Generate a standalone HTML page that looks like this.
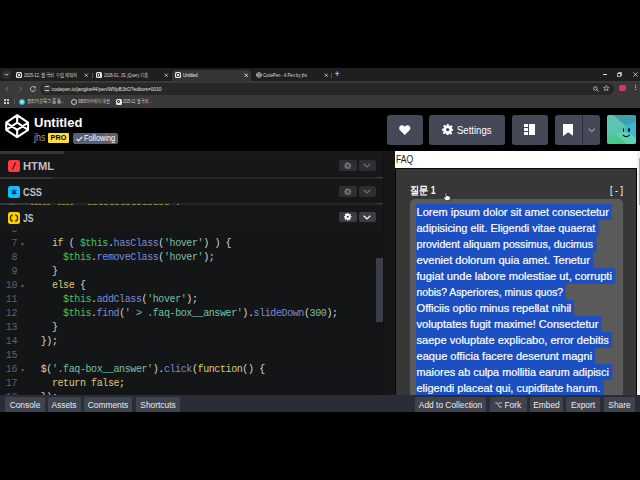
<!DOCTYPE html>
<html><head><meta charset="utf-8">
<style>
*{margin:0;padding:0;box-sizing:border-box}
html,body{width:640px;height:480px;overflow:hidden;background:#000;font-family:"Liberation Sans",sans-serif}
.a{position:absolute}
.mono{font-family:"Liberation Mono",monospace}
/* chrome */
#tabs{left:0;top:68px;width:640px;height:13px;background:#1f1f1f}
#toolbar{left:0;top:81px;width:640px;height:14px;background:#393939}
#bookmarks{left:0;top:95px;width:640px;height:13px;background:#393939}
#cphead{left:0;top:108px;width:640px;height:43px;background:#000}
#editor{left:0;top:151px;width:383px;height:244px;background:#131517}
#resizer{left:383px;top:151px;width:12px;height:244px;background:#161616;border-left:1px solid #101112}
#preview{left:395px;top:151px;width:245px;height:244px;background:#fff}
#footer{z-index:5;left:0;top:394.7px;width:640px;height:16.9px;background:#2a2d35}
.btn{position:absolute;background:#444857;border-radius:3px;color:#fff}
.fbtn{position:absolute;z-index:6;top:397px;height:14.6px;background:#3f434e;border-radius:2px 2px 0 0;color:#ececec;font-size:8.4px;line-height:16.4px;text-align:center;white-space:nowrap}
.ln{position:absolute;font-family:"Liberation Mono",monospace;left:0;width:17px;text-align:right;color:#5f626b;font-size:10px;letter-spacing:-0.4px;line-height:14px}
.code{position:absolute;font-family:"Liberation Mono",monospace;left:40.7px;color:#ccc;font-size:10px;letter-spacing:-0.4px;line-height:14px;white-space:pre}
.k{color:#ddca7e}.v{color:#47c45e}.m{color:#7b8ad6}.s{color:#74c2a5}.p{color:#d5d5d5}
.sel{position:absolute;left:416px;height:16px;background:#1d4dbb}
.txt{position:absolute;left:416px;color:#fff;-webkit-text-stroke:0.2px #fff;font-size:10.5px;line-height:16px;white-space:pre}

.fav{width:6px;height:6px;background:#e8e8e8;border-radius:1.5px}.fav::after{content:"";position:absolute;left:1.3px;top:1.3px;width:3.4px;height:3.4px;border:0.8px solid #333;border-radius:1px;box-sizing:border-box}
.ttl{top:69.8px;color:#dcdcdc;font-size:5.8px;line-height:10px;white-space:nowrap}
.x{top:69.5px;color:#bbb;font-size:7px;line-height:10px}
.bk{top:96px;color:#d6d6d6;font-size:5.6px;line-height:11px;white-space:nowrap}

.ico{width:12px;height:12px;border-radius:2.5px}.ico svg{display:block}
.etl{left:23.4px;color:#bdbfc7;font-weight:bold;font-size:11.5px;line-height:14px}
.gb,.cb{width:17.5px;height:10.5px;background:#2c2e34;border-radius:2px}
.gb.on,.cb.on{background:#3a3d45}
.fm{position:absolute;left:21px;color:#5a5d66;font-size:6px;line-height:14px}
.txt span{display:inline-block;height:16px;background:#1b4fc2;transform-origin:0 0;padding-left:0.5px}
</style></head><body>
<div id="tabs" class="a"></div>
<div id="toolbar" class="a"></div>
<div id="bookmarks" class="a"></div>
<div id="cphead" class="a"></div>
<div id="editor" class="a"></div>
<div class="a" style="left:0;top:151px;width:383px;height:79px;background:#171717"></div>
<div id="resizer" class="a"></div>
<div id="preview" class="a"></div>
<div id="footer" class="a"></div>


<!-- tab strip -->
<div class="a" style="left:2px;top:70px;width:9px;height:9px;background:#2e2e2e;border-radius:3px"></div>
<svg class="a" style="left:4px;top:72px" width="5" height="5" viewBox="0 0 5 5"><path d="M0.8 1.6 L2.5 3.3 L4.2 1.6" stroke="#ddd" stroke-width="1" fill="none"/></svg>
<div class="a" style="left:172px;top:70px;width:79px;height:12px;background:#353535;border-radius:4px 4px 0 0"></div>
<div class="a fav" style="left:16px;top:72px"></div>
<div class="a ttl" style="left:23.5px;--w:53.6px;transform-origin:0 0;transform:scaleX(0.6932)/*fit*/">2025-12, 웹 국비 수업 제작자</div>
<svg class="a" style="left:84.2px;top:72.5px" width="4.5" height="4.5" viewBox="0 0 5 5"><path d="M0.6 0.6 L4.4 4.4 M4.4 0.6 L0.6 4.4" stroke="#ccc" stroke-width="0.9"/></svg>
<div class="a" style="left:91.5px;top:73px;width:1px;height:5px;background:#555"></div>
<div class="a fav" style="left:95.5px;top:72px"></div>
<div class="a ttl" style="left:103.6px;--w:44.4px;transform-origin:0 0;transform:scaleX(0.6813)/*fit*/">2026-01, JS, jQuery 기초</div>
<svg class="a" style="left:164.2px;top:72.5px" width="4.5" height="4.5" viewBox="0 0 5 5"><path d="M0.6 0.6 L4.4 4.4 M4.4 0.6 L0.6 4.4" stroke="#ccc" stroke-width="0.9"/></svg>
<div class="a fav" style="left:175px;top:72px"></div>
<div class="a ttl" style="left:183.4px;color:#f4f4f4;--w:14.6px;transform-origin:0 0;transform:scaleX(0.7428)/*fit*/">Untitled</div>
<svg class="a" style="left:243.5px;top:72.5px" width="4.5" height="4.5" viewBox="0 0 5 5"><path d="M0.6 0.6 L4.4 4.4 M4.4 0.6 L0.6 4.4" stroke="#eee" stroke-width="0.9"/></svg>
<svg class="a" style="left:255.5px;top:72px" width="6" height="6" viewBox="0 0 100 100"><path d="M50 5 L95 35 V65 L50 95 L5 65 V35 Z M50 5 V35 M50 65 V95 M5 35 L50 65 L95 35 M5 65 L50 35 L95 65" stroke="#ccc" stroke-width="12" fill="none"/></svg>
<div class="a ttl" style="left:263px;--w:44px;transform-origin:0 0;transform:scaleX(0.7186)/*fit*/">CodePen - A Pen by jhs</div>
<svg class="a" style="left:323.7px;top:72.5px" width="4.5" height="4.5" viewBox="0 0 5 5"><path d="M0.6 0.6 L4.4 4.4 M4.4 0.6 L0.6 4.4" stroke="#ccc" stroke-width="0.9"/></svg>
<div class="a" style="left:331px;top:73px;width:1px;height:5px;background:#555"></div>
<div class="a" style="left:334.5px;top:69px;color:#eee;font-size:9px;line-height:11px">+</div>
<div class="a" style="left:602.5px;top:74.3px;width:4px;height:0.8px;background:#ddd"></div>
<svg class="a" style="left:617px;top:72px" width="5" height="5" viewBox="0 0 5 5"><path d="M0.5 1.5 H3.5 V4.5 H0.5 Z M1.5 1.5 V0.5 H4.5 V3.5 H3.5" stroke="#ddd" stroke-width="0.8" fill="none"/></svg>
<svg class="a" style="left:632.8px;top:72.3px" width="5" height="5" viewBox="0 0 5 5"><path d="M0.5 0.5 L4.5 4.5 M4.5 0.5 L0.5 4.5" stroke="#ddd" stroke-width="0.8"/></svg>
<!-- toolbar -->
<svg class="a" style="left:4px;top:86px" width="34" height="6" viewBox="0 0 34 6">
<path d="M4.5 0.5 L2 3 L4.5 5.5" stroke="#777" stroke-width="0.9" fill="none"/>
<path d="M15 0.5 L17.5 3 L15 5.5" stroke="#777" stroke-width="0.9" fill="none"/>
<path d="M30.5 1.2 A2.4 2.4 0 1 0 31.2 3.6" stroke="#ccc" stroke-width="0.9" fill="none"/><path d="M29.6 0.6 L31.4 0.9 L31.1 2.6" stroke="#ccc" stroke-width="0.8" fill="none"/>
</svg>
<div class="a" style="left:40px;top:83px;width:574px;height:11.5px;background:#272727;border-radius:6px"></div>
<div class="a" style="left:42.5px;top:84px;width:9px;height:9px;background:#3a3a3a;border-radius:50%"></div>
<div class="a" style="left:45px;top:86px;width:4px;height:5px;border-top:1px solid #ccc;border-bottom:1px solid #ccc"></div>
<div class="a" style="left:51.8px;top:83.5px;color:#e3e3e3;font-size:6px;line-height:11px;white-space:nowrap;--w:109.5px;transform-origin:0 0;transform:scaleX(0.8036)/*fit*/">codepen.io/jangkw44/pen/WNpBJbO?editors=0010</div>
<svg class="a" style="left:593px;top:85.5px" width="6" height="6" viewBox="0 0 6 6"><circle cx="2.4" cy="2.4" r="1.7" stroke="#ccc" stroke-width="0.8" fill="none"/><path d="M3.7 3.7 L5.5 5.5" stroke="#ccc" stroke-width="0.9"/></svg>
<svg class="a" style="left:603px;top:85.3px" width="6.5" height="6.5" viewBox="0 0 24 24"><path d="M12 2 L14.9 8.6 L22 9.3 L16.6 14 L18.2 21 L12 17.3 L5.8 21 L7.4 14 L2 9.3 L9.1 8.6 Z" stroke="#ddd" stroke-width="2.2" fill="none" stroke-linejoin="round"/></svg>
<div class="a" style="left:619px;top:85px;width:7px;height:6px;background:#d8336b;border-radius:2px"></div>
<div class="a" style="left:635px;top:85px;width:1px;height:1px;background:#ccc;box-shadow:0 2px 0 #ccc,0 4px 0 #ccc"></div>
<!-- bookmarks -->
<div class="a" style="left:4px;top:99px;width:2px;height:2px;background:#ccc;box-shadow:3px 0 0 #ccc,0 3px 0 #ccc,3px 3px 0 #ccc"></div>
<div class="a" style="left:14px;top:98px;width:1px;height:6px;background:#555"></div>
<div class="a" style="left:19px;top:98.5px;width:6px;height:6px;background:radial-gradient(circle,#eaffff 0,#5ad0e8 40%,#1d6a88 100%);border-radius:50%"></div>
<div class="a bk" style="left:27px;--w:37px;transform-origin:0 0;transform:scaleX(0.6824)/*fit*/">코리아교육그룹 통...</div>
<div class="a" style="left:70.5px;top:98.5px;width:6px;height:6px;border:1px solid #ccc;border-radius:50%"></div>
<div class="a bk" style="left:77.6px;--w:32.4px;transform-origin:0 0;transform:scaleX(0.6646)/*fit*/">SBS아카데미 대전</div>
<div class="a fav" style="left:115.5px;top:98.5px"></div>
<div class="a bk" style="left:123.3px;--w:28.1px;transform-origin:0 0;transform:scaleX(0.5871)/*fit*/">2025-12, 웹 국비...</div>

<!-- header -->
<svg class="a" style="left:5px;top:114.3px" width="24.33" height="24.33" viewBox="0 0 100 100"><path d="M50 5 L95 35 V65 L50 95 L5 65 V35 Z M50 5 V35 M50 65 V95 M5 35 L50 65 L95 35 M5 65 L50 35 L95 65" stroke="#fff" stroke-width="8.6" fill="none" stroke-linejoin="round"/></svg>
<div class="a" style="left:34px;top:115px;color:#fff;font-weight:bold;font-size:13px;line-height:16px">Untitled</div>
<div class="a" style="left:34px;top:131px;color:#9a9ca6;font-size:10.5px;line-height:12px;transform-origin:0 0;transform:scaleX(0.85)">jhs</div>
<div class="a" style="left:48px;top:133px;width:21px;height:9.5px;background:#ffdd40;color:#000;font-weight:bold;font-size:7.3px;line-height:9.5px;text-align:center;border-radius:1px">PRO</div>
<div class="a" style="left:72.5px;top:133px;width:45px;height:10.5px;background:#5a5f73;border-radius:2px"></div>
<svg class="a" style="left:76px;top:135.5px" width="7" height="6" viewBox="0 0 7 6"><path d="M0.8 3 L2.6 4.8 L6.2 0.9" stroke="#fff" stroke-width="1.1" fill="none"/></svg>
<div class="a" style="left:83.5px;top:133px;color:#fff;font-size:8.3px;line-height:10.5px;white-space:nowrap;transform-origin:0 0;transform:scaleX(0.89)">Following</div>

<div class="btn" style="left:387px;top:115px;width:36px;height:29.6px"></div>
<svg class="a" style="left:399px;top:124.5px" width="11.5" height="10" viewBox="0 0 23 20"><path d="M11.5 20 L2 10.5 C-1 7.5 0 1 5.5 0.5 C8.5 0.2 10.5 2 11.5 4 C12.5 2 14.5 0.2 17.5 0.5 C23 1 24 7.5 21 10.5 Z" fill="#fff"/></svg>
<div class="btn" style="left:429px;top:115px;width:76px;height:29.6px"></div>
<svg class="a" style="left:441.8px;top:123.8px" width="11.4" height="11.4" viewBox="0 0 24 24"><path fill="#fff" fill-rule="evenodd" d="M10 0h4l0.6 3.4 2.3 1 2.8-2 2.8 2.8-2 2.8 1 2.3L24 10v4l-3.4 0.6-1 2.3 2 2.8-2.8 2.8-2.8-2-2.3 1L14 24h-4l-0.6-3.4-2.3-1-2.8 2-2.8-2.8 2-2.8-1-2.3L0 14v-4l3.4-0.6 1-2.3-2-2.8 2.8-2.8 2.8 2 2.3-1z M12 8.6a3.4 3.4 0 1 0 0.01 0z"/></svg>
<div class="a" style="left:456.5px;top:122.8px;color:#fff;font-size:11.5px;line-height:14px;white-space:nowrap;transform-origin:0 0;transform:scaleX(0.83)">Settings</div>
<div class="btn" style="left:512px;top:115px;width:36px;height:29.6px"></div>
<div class="a" style="left:524px;top:124.2px;width:4px;height:3px;background:#fff"></div>
<div class="a" style="left:524px;top:128.2px;width:4px;height:2.8px;background:#fff"></div>
<div class="a" style="left:524px;top:132px;width:4px;height:3px;background:#fff"></div>
<div class="a" style="left:529px;top:124.2px;width:6.2px;height:10.8px;background:#fff"></div>
<div class="btn" style="left:555px;top:115px;width:45px;height:29.6px"></div>
<div class="a" style="left:582px;top:115px;width:1px;height:29px;background:#2a2c35"></div>
<svg class="a" style="left:562.7px;top:123.7px" width="10.5" height="12.2" viewBox="0 0 10.5 12.2"><path d="M0 0 H10.5 V12.2 L5.25 8.2 L0 12.2 Z" fill="#fff"/></svg>
<svg class="a" style="left:587.5px;top:128px" width="7.5" height="4.5" viewBox="0 0 7.5 4.5"><path d="M0.6 0.6 L3.75 3.6 L6.9 0.6" stroke="#a0a3ad" stroke-width="1.1" fill="none"/></svg>
<div class="a" style="left:606.5px;top:114.8px;width:29.5px;height:29.4px;border-radius:2.5px;overflow:hidden">
<svg width="30" height="30" viewBox="0 0 30 30" style="display:block"><path d="M0 0 H30 V30 H0Z" fill="#57c9a8"/><path d="M0 0 H6 L19 11 L0 16Z" fill="#5fc4b4"/><path d="M6 0 H30 V7 L19 11Z" fill="#3f9fb0"/><path d="M30 6 V23 L17 16 L19 11Z" fill="#3db6d4"/><path d="M0 16 L19 11 L17 16 L8 19 L0 22Z" fill="#56c4ae"/><path d="M0 22 L8 19 L22 30 H0Z" fill="#46c98a"/><path d="M8 19 L17 16 L30 23 V30 H22Z" fill="#5dd3b2"/></svg>
</div>
<div class="a" style="left:622.5px;top:128.3px;width:1.8px;height:3.7px;background:#111;border-radius:1px"></div>
<div class="a" style="left:627.9px;top:128.3px;width:1.8px;height:3.7px;background:#111;border-radius:1px"></div>
<svg class="a" style="left:622px;top:133.8px" width="8.5" height="4" viewBox="0 0 8.5 4"><path d="M0.8 0.8 Q4.25 4.4 7.7 0.8" stroke="#111" stroke-width="1.2" fill="none"/></svg>

<!-- editor headers -->
<div class="a" style="left:16px;top:160px;width:12px;height:12px"></div>


<!-- editor headers -->
<div class="a" style="left:0;top:151px;width:383px;height:2px;background:#1b1c1f"></div>
<div class="a" style="left:0;top:151px;width:64px;height:2.5px;background:#34363d"></div>
<div class="a" style="left:0;top:177px;width:383px;height:1.5px;background:#242526"></div>
<div class="a" style="left:0;top:177px;width:53px;height:2px;background:#34363d"></div>
<div class="a" style="left:0;top:203px;width:383px;height:1.5px;background:#242526"></div>
<div class="a" style="left:0;top:203px;width:40px;height:2px;background:#34363d"></div>
<div class="a" style="left:376px;top:177px;width:7px;height:1px;background:#3a3c44"></div>
<div class="a" style="left:376px;top:203px;width:7px;height:1px;background:#3a3c44"></div>
<div class="a" style="left:9px;top:204px;width:5px;height:1px;background:#55565c"></div><div class="a" style="left:31px;top:204px;width:20px;height:1px;background:repeating-linear-gradient(90deg,#8f8446 0 3px,transparent 3px 4px)"></div><div class="a" style="left:58px;top:204px;width:16px;height:1px;background:repeating-linear-gradient(90deg,#8f8446 0 3px,transparent 3px 4px)"></div><div class="a" style="left:88px;top:204px;width:82px;height:1px;background:repeating-linear-gradient(90deg,#8f8446 0 4px,transparent 4px 5px,#8f8446 5px 9px,transparent 9px 11px)"></div><div class="a" style="left:177px;top:204px;width:2px;height:1px;background:#77777a"></div>

<div class="a ico" style="left:8px;top:160px;background:#ff3c41"><svg width="12" height="12" viewBox="0 0 12 12"><path d="M7.6 2.6 L4.4 9.4" stroke="#4a0e10" stroke-width="1.2"/></svg></div>
<div class="a etl" style="top:159px;--w:31px;transform-origin:0 0;transform:scaleX(0.9706)/*fit*/">HTML</div>
<div class="a ico" style="left:8px;top:186px;background:#0ebeff"><svg width="12" height="12" viewBox="0 0 12 12"><path d="M6 3.2 V8.8 M3.6 4.6 L8.4 7.4 M8.4 4.6 L3.6 7.4" stroke="#063a5a" stroke-width="1.1"/></svg></div>
<div class="a etl" style="top:185px;--w:19px;transform-origin:0 0;transform:scaleX(0.8032)/*fit*/">CSS</div>
<div class="a ico" style="left:8px;top:212px;background:#fcd000"><svg width="12" height="12" viewBox="0 0 12 12"><path d="M4.8 2.8 Q2.4 3.2 2.4 6 Q2.4 8.8 4.8 9.2 M7.2 2.8 Q9.6 3.2 9.6 6 Q9.6 8.8 7.2 9.2" stroke="#3a3000" stroke-width="1.3" fill="none"/></svg></div>
<div class="a etl" style="top:211px;--w:10.5px;transform-origin:0 0;transform:scaleX(0.7458)/*fit*/">JS</div>

<div class="a gb" style="left:339px;top:160px"><svg width="7.5" height="7.5" viewBox="0 0 24 24" style="position:absolute;left:5px;top:1.5px"><path fill="#6d6f77" fill-rule="evenodd" d="M10 0h4l0.6 3.4 2.3 1 2.8-2 2.8 2.8-2 2.8 1 2.3L24 10v4l-3.4 0.6-1 2.3 2 2.8-2.8 2.8-2.8-2-2.3 1L14 24h-4l-0.6-3.4-2.3-1-2.8 2-2.8-2.8 2-2.8-1-2.3L0 14v-4l3.4-0.6 1-2.3-2-2.8 2.8-2.8 2.8 2 2.3-1z M12 8.6a3.4 3.4 0 1 0 0.01 0z"/></svg></div><div class="a cb" style="left:358.5px;top:160px"><svg width="8" height="5" viewBox="0 0 8 5" style="position:absolute;left:4.75px;top:3px"><path d="M0.7 0.7 L4 3.9 L7.3 0.7" stroke="#6d6f77" stroke-width="1.2" fill="none"/></svg></div>
<div class="a gb" style="left:339px;top:186px"><svg width="7.5" height="7.5" viewBox="0 0 24 24" style="position:absolute;left:5px;top:1.5px"><path fill="#6d6f77" fill-rule="evenodd" d="M10 0h4l0.6 3.4 2.3 1 2.8-2 2.8 2.8-2 2.8 1 2.3L24 10v4l-3.4 0.6-1 2.3 2 2.8-2.8 2.8-2.8-2-2.3 1L14 24h-4l-0.6-3.4-2.3-1-2.8 2-2.8-2.8 2-2.8-1-2.3L0 14v-4l3.4-0.6 1-2.3-2-2.8 2.8-2.8 2.8 2 2.3-1z M12 8.6a3.4 3.4 0 1 0 0.01 0z"/></svg></div><div class="a cb" style="left:358.5px;top:186px"><svg width="8" height="5" viewBox="0 0 8 5" style="position:absolute;left:4.75px;top:3px"><path d="M0.7 0.7 L4 3.9 L7.3 0.7" stroke="#6d6f77" stroke-width="1.2" fill="none"/></svg></div>
<div class="a gb on" style="left:339px;top:211.7px"><svg width="7.5" height="7.5" viewBox="0 0 24 24" style="position:absolute;left:5px;top:1.5px"><path fill="#fff" fill-rule="evenodd" d="M10 0h4l0.6 3.4 2.3 1 2.8-2 2.8 2.8-2 2.8 1 2.3L24 10v4l-3.4 0.6-1 2.3 2 2.8-2.8 2.8-2.8-2-2.3 1L14 24h-4l-0.6-3.4-2.3-1-2.8 2-2.8-2.8 2-2.8-1-2.3L0 14v-4l3.4-0.6 1-2.3-2-2.8 2.8-2.8 2.8 2 2.3-1z M12 8.6a3.4 3.4 0 1 0 0.01 0z"/></svg></div><div class="a cb on" style="left:358.5px;top:211.7px"><svg width="8" height="5" viewBox="0 0 8 5" style="position:absolute;left:4.75px;top:3px"><path d="M0.7 0.7 L4 3.9 L7.3 0.7" stroke="#fff" stroke-width="1.2" fill="none"/></svg></div>

<!-- code -->
<div class="a" style="left:0;top:230px;width:383px;height:165px;overflow:hidden">
<div style="position:absolute;left:0;top:-7.5px;width:383px">
<div class="ln" style="top:0">6</div>
<div class="ln" style="top:14px">7</div><div class="fm" style="top:14px">▾</div>
<div class="ln" style="top:28px">8</div>
<div class="ln" style="top:42px">9</div>
<div class="ln" style="top:56px">10</div><div class="fm" style="top:56px">▾</div>
<div class="ln" style="top:70px">11</div>
<div class="ln" style="top:84px">12</div>
<div class="ln" style="top:98px">13</div>
<div class="ln" style="top:112px">14</div>
<div class="ln" style="top:126px">15</div>
<div class="ln" style="top:140px">16</div><div class="fm" style="top:140px">▾</div>
<div class="ln" style="top:154px">17</div>
<div class="ln" style="top:168px">18</div>
<div class="code" style="top:14px">  <span class="k">if</span> <span class="p">(</span> <span class="v">$this</span><span class="p">.</span><span class="m">hasClass</span><span class="p">(</span><span class="s">'hover'</span><span class="p">) ) {</span></div>
<div class="code" style="top:28px">    <span class="v">$this</span><span class="p">.</span><span class="m">removeClass</span><span class="p">(</span><span class="s">'hover'</span><span class="p">);</span></div>
<div class="code" style="top:42px">  <span class="p">}</span></div>
<div class="code" style="top:56px">  <span class="k">else</span> <span class="p">{</span></div>
<div class="code" style="top:70px">    <span class="v">$this</span><span class="p">.</span><span class="m">addClass</span><span class="p">(</span><span class="s">'hover'</span><span class="p">);</span></div>
<div class="code" style="top:84px">    <span class="v">$this</span><span class="p">.</span><span class="m">find</span><span class="p">(</span><span class="s">' &gt; .faq-box__answer'</span><span class="p">).</span><span class="m">slideDown</span><span class="p">(</span><span class="s">300</span><span class="p">);</span></div>
<div class="code" style="top:98px">  <span class="p">}</span></div>
<div class="code" style="top:112px"><span class="p">});</span></div>
<div class="code" style="top:140px"><span class="p">$(</span><span class="s">'.faq-box__answer'</span><span class="p">).</span><span class="m">click</span><span class="p">(</span><span class="k">function</span><span class="p">() {</span></div>
<div class="code" style="top:154px">  <span class="k">return false</span><span class="p">;</span></div>
<div class="code" style="top:168px"><span class="p">});</span></div>
</div></div>
<!-- scrollbar -->
<div class="a" style="left:375.7px;top:258px;width:7.3px;height:64px;background:#3a3d48"></div>

<!-- preview -->
<div class="a" style="left:395.8px;top:152px;color:#1a1a1a;font-size:10.5px;line-height:15px;--w:17.2px;transform-origin:0 0;transform:scaleX(0.8184)/*fit*/">FAQ</div>
<div class="a" style="left:395px;top:168px;width:242px;height:227px;background:#373737;border-left:1px solid #060606;border-top:1px solid #080808;border-right:1px solid #050505"></div>
<div class="a" style="left:637px;top:151px;width:3px;height:244px;background:#f1f1f1"></div>
<div class="a" style="left:638.5px;top:158px;width:1.5px;height:47px;background:#a8a8a8"></div>
<div class="a" style="left:410px;top:183.8px;color:#fff;font-weight:bold;font-size:10.5px;line-height:12px;--w:25.5px;transform-origin:0 0;transform:scaleX(0.8288)/*fit*/">질문 1</div>
<div class="a" style="left:609.7px;top:183.5px;color:#fff;font-size:10.5px;line-height:12px;white-space:pre;--w:13px;transform-origin:0 0;transform:scaleX(0.8568)/*fit*/">[ - ]</div>
<div class="a" style="left:410px;top:199px;width:213.3px;height:200px;background:#5a5a5a;border-radius:5px"></div>
<svg class="a" style="left:442.8px;top:191.5px;z-index:3" width="8" height="9" viewBox="0 0 8 9"><path d="M2.3 5.2 V1.2 Q2.3 0.4 3 0.4 Q3.7 0.4 3.7 1.2 V3.8 Q4.3 3.5 4.9 3.9 Q5.6 3.7 6.1 4.2 Q7 4.1 7.3 4.8 V6.6 Q7.3 8.6 5.2 8.6 H3.6 Q2.5 8.6 1.8 7.6 L0.5 5.8 Q0.3 5 1.1 4.9 Q1.7 4.9 2.3 5.6 Z" fill="#fff" stroke="#000" stroke-width="0.6"/></svg>
<div class="txt" style="top:204px"><span style="transform:scaleX(1.0462)">Lorem ipsum dolor sit amet consectetur&nbsp;</span></div>
<div class="txt" style="top:220px"><span style="transform:scaleX(1.0381)">adipisicing elit. Eligendi vitae quaerat&nbsp;</span></div>
<div class="txt" style="top:236px"><span style="transform:scaleX(1.0084)">provident aliquam possimus, ducimus&nbsp;</span></div>
<div class="txt" style="top:252px"><span style="transform:scaleX(1.0547)">eveniet dolorum quia amet. Tenetur&nbsp;</span></div>
<div class="txt" style="top:268px"><span style="transform:scaleX(1.0593)">fugiat unde labore molestiae ut, corrupti&nbsp;</span></div>
<div class="txt" style="top:284px"><span style="transform:scaleX(0.9851)">nobis? Asperiores, minus quos?&nbsp;</span></div>
<div class="txt" style="top:300px"><span style="transform:scaleX(1.0539)">Officiis optio minus repellat nihil&nbsp;</span></div>
<div class="txt" style="top:316px"><span style="transform:scaleX(1.0529)">voluptates fugit maxime! Consectetur&nbsp;</span></div>
<div class="txt" style="top:332px"><span style="transform:scaleX(1.0525)">saepe voluptate explicabo, error debitis&nbsp;</span></div>
<div class="txt" style="top:348px"><span style="transform:scaleX(1.0531)">eaque officia facere deserunt magni&nbsp;</span></div>
<div class="txt" style="top:364px"><span style="transform:scaleX(1.0333)">maiores ab culpa mollitia earum adipisci&nbsp;</span></div>
<div class="txt" style="top:380px"><span style="transform:scaleX(1.0434)">eligendi placeat qui, cupiditate harum.&nbsp;</span></div>

<!-- footer buttons -->
<div class="fbtn" style="left:5px;width:40px">Console</div>
<div class="fbtn" style="left:47.5px;width:33px">Assets</div>
<div class="fbtn" style="left:84px;width:48px">Comments</div>
<div class="fbtn" style="left:136px;width:44px">Shortcuts</div>
<div class="fbtn" style="left:415px;width:71px">Add to Collection</div>
<div class="fbtn" style="left:490px;width:37px;text-align:left;padding-left:14.5px">Fork</div>
<svg class="a" style="left:495px;top:401.5px;z-index:7" width="7" height="6" viewBox="0 0 7 6"><path d="M0.3 1 H2.3 L4.6 5 H6.8 M3.9 1 H6.8" stroke="#ddd" stroke-width="0.9" fill="none"/></svg>
<div class="fbtn" style="left:530px;width:33px">Embed</div>
<div class="fbtn" style="left:566px;width:34px">Export</div>
<div class="fbtn" style="left:604px;width:31px">Share</div>
</body></html>
